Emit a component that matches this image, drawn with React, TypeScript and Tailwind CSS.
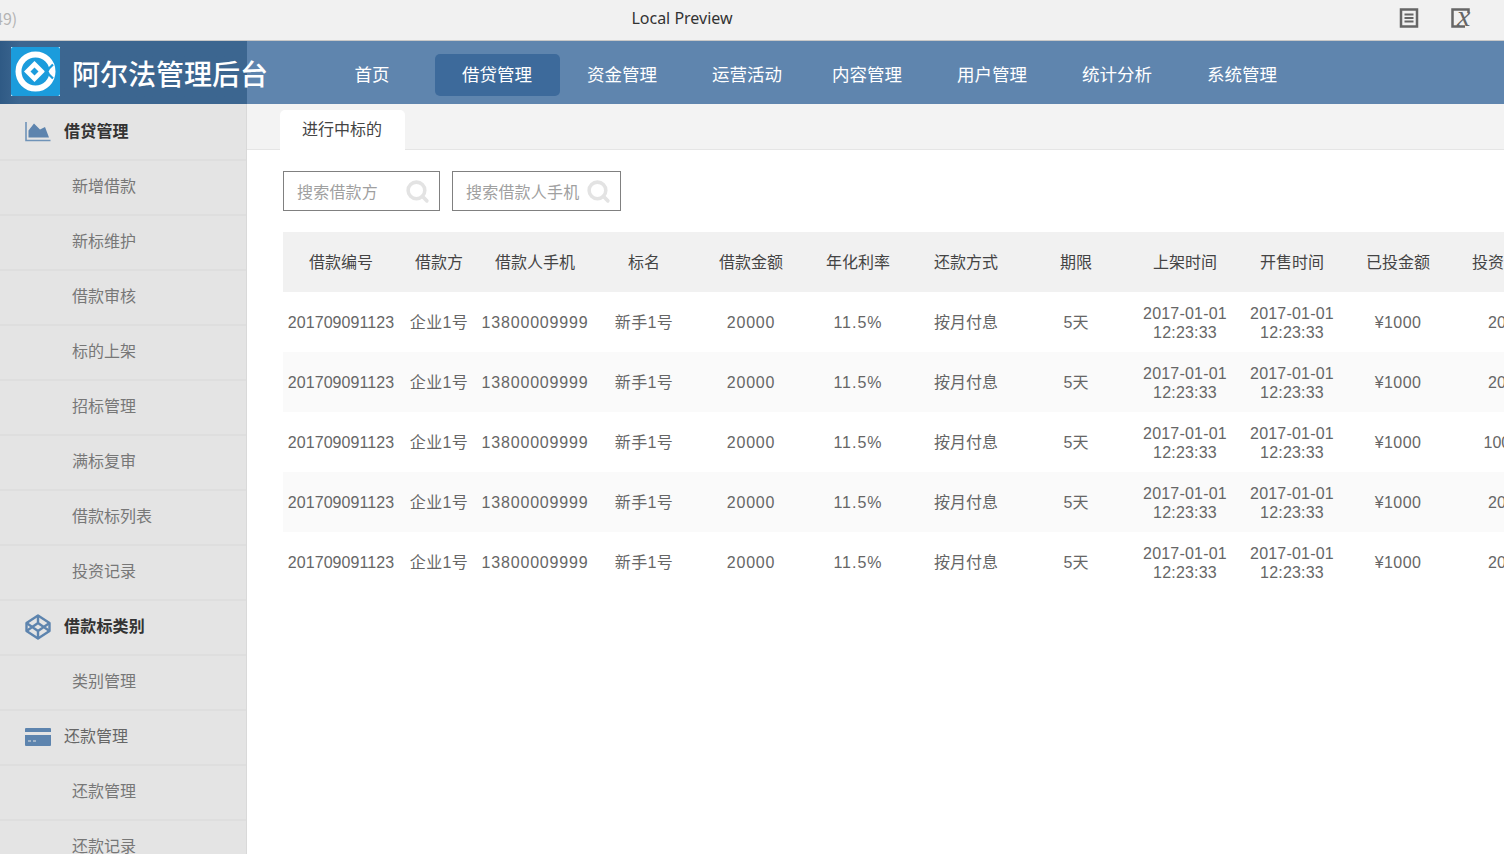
import { Search } from "lucide-react";

const FONT = "font-['Noto_Sans_CJK_SC','Noto_Sans',sans-serif]";

const navItems = ["首页", "借贷管理", "资金管理", "运营活动", "内容管理", "用户管理", "统计分析", "系统管理"];

const columns = ["借款编号", "借款方", "借款人手机", "标名", "借款金额", "年化利率", "还款方式", "期限", "上架时间", "开售时间", "已投金额", "投资进度"];

const progress = ["20%", "20%", "100%", "20%", "20%"];

const GRID = "grid grid-cols-[116px_80px_112px_106px_108px_106px_110px_110px_108px_106px_106px_106px] w-[1274px]";

function Logo() {
  return (
    <svg width="49" height="49" viewBox="0 0 49 49" className="mb-[2px] shrink-0">
      <rect width="49" height="49" fill="#fff" />
      <rect width="49" height="49" rx="2" fill="#1b9cdc" />
      <circle cx="24.500" cy="24.500" r="17" fill="none" stroke="#fff" strokeWidth="6" />
      <path d="M23.500 14 34 24.500 23.500 35 13 24.500Z" fill="#fff" />
      <path d="M23.500 20.500 27.500 24.500 23.500 28.500 19.500 24.500Z" fill="#1b9cdc" />
      <path d="M42 17.500 35 24.500 42 31.500" fill="none" stroke="#1b9cdc" strokeWidth="2.200" />
      <path d="M37.500 24.500 41 21 41 28Z" fill="#fff" />
    </svg>
  );
}

function SideIcon({ kind }: { kind: "chart" | "codepen" | "card" }) {
  if (kind === "chart") {
    return (
      <svg width="26" height="20" viewBox="0 0 26 20">
        <path d="M1 0V18.500H25.500" fill="none" stroke="#6f93b8" strokeWidth="1.600" />
        <path d="M3.500 15.500V8.500L9 1.500 15 7.500 20 5 24 15.500Z" fill="#5d84ae" />
      </svg>
    );
  }
  if (kind === "codepen") {
    return (
      <svg width="26" height="26" viewBox="0 0 26 26" fill="none" stroke="#5d84ae" strokeWidth="2.400" strokeLinejoin="round">
        <path d="M13 1.500 24.500 9V17L13 24.500 1.500 17V9Z" />
        <path d="M13 1.500V9M13 17V24.500M1.500 9 13 17 24.500 9M1.500 17 13 9 24.500 17" />
      </svg>
    );
  }
  return (
    <svg width="26" height="18" viewBox="0 0 26 18">
      <path d="M1 0H25A1 1 0 0 1 26 1V4H0V1A1 1 0 0 1 1 0Z" fill="#5d84ae" />
      <path d="M0 7H26V17A1 1 0 0 1 25 18H1A1 1 0 0 1 0 17Z" fill="#5d84ae" />
      <path d="M3 13H6M8 13H11" stroke="#e4e4e4" />
    </svg>
  );
}

function SideHead({ icon, label, bold }: { icon: "chart" | "codepen" | "card"; label: string; bold?: boolean }) {
  return (
    <div className="flex h-[55px] shrink-0 items-center border-t-2 border-[#dedede] pb-[6px] pl-[25px] first:border-t-transparent">
      <div className="mt-[4px] flex w-[39px] items-center">
        <SideIcon kind={icon} />
      </div>
      <span className={bold ? "text-base font-bold text-[#333333] tracking-[0.2px]" : "text-base text-[#666666]"}>{label}</span>
    </div>
  );
}

function SideItem({ label }: { label: string }) {
  return (
    <div className="flex h-[55px] shrink-0 items-center border-t-2 border-[#dedede] pb-[6px] pl-[72px] text-base text-[#777777]">
      {label}
    </div>
  );
}

function SearchBox({ placeholder, width }: { placeholder: string; width: string }) {
  return (
    <div className={`flex h-10 items-center justify-between border border-[#808080] pl-[13px] pr-[9px] ${width}`}>
      <span className="text-base text-[#a0a0a0] tracking-[0.2px]">{placeholder}</span>
      <Search size={25} strokeWidth={3.4} className="text-[#e3e3e3]" />
    </div>
  );
}

export default function App() {
  return (
    <div className={`flex h-[854px] w-[1504px] flex-col overflow-hidden bg-white ${FONT}`}>
      <div className="relative flex h-[41px] shrink-0 items-center justify-center border-b border-[#c8c8c8] bg-[#f1f1f1] pb-[4px] pr-[140px]">
        <span className="absolute left-[-6px] top-[6px] text-base text-[#b4b4b4]">49)</span>
        <span className="font-['Noto_Sans',sans-serif] text-base text-[#333333]">Local Preview</span>
        <svg width="20" height="20" viewBox="0 0 20 20" className="absolute left-[1399px] top-[8px]" fill="none" stroke="#666666" strokeWidth="2">
          <rect x="2" y="1.500" width="16" height="17" strokeWidth="2.500" />
          <path d="M5.500 6.500H14.500M5.500 10H14.500M5.500 13.500H14.500" />
        </svg>
        <svg width="21" height="20" viewBox="0 0 21 20" className="absolute left-[1451px] top-[8px] overflow-visible" fill="none" stroke="#666666">
          <path d="M17.500 4V1.500H1.500V18.500H14" strokeWidth="2.500" />
          <text x="6" y="18" fontFamily="Liberation Serif" fontStyle="italic" fontSize="30" fill="#666666" stroke="none">x</text>
        </svg>
      </div>

      <div className="flex h-[63px] shrink-0 bg-[#5f85ae]">
        <div className="flex w-[247px] shrink-0 items-center bg-gradient-to-r from-[#2f5a85] from-0% via-[#3c6690] via-[8%] to-[#3c6690] pl-[11px]">
          <Logo />
          <span className="ml-3 whitespace-nowrap text-[28px] font-medium text-white">阿尔法管理后台</span>
        </div>
        <nav className="ml-[63px] mt-[4px] flex items-center">
          {navItems.map((item, i) => (
            <div
              key={item}
              className={`flex h-[42px] w-[125px] items-center justify-center rounded-[5px] pr-[1px] text-[17.5px] text-white ${i === 1 ? "bg-[#3d6a9b]" : ""} ${i === 4 ? "ml-[-5px]" : ""}`}
            >
              {item}
            </div>
          ))}
        </nav>
      </div>

      <div className="flex min-h-0 flex-1">
        <aside className="flex w-[247px] shrink-0 flex-col border-r border-[#d9d9d9] bg-[#e4e4e4]">
          <SideHead icon="chart" label="借贷管理" bold />
          {["新增借款", "新标维护", "借款审核", "标的上架", "招标管理", "满标复审", "借款标列表", "投资记录"].map((item) => (
            <SideItem key={item} label={item} />
          ))}
          <SideHead icon="codepen" label="借款标类别" bold />
          <SideItem label="类别管理" />
          <SideHead icon="card" label="还款管理" />
          <SideItem label="还款管理" />
          <SideItem label="还款记录" />
        </aside>

        <main className="min-w-0 flex-1">
          <div className="flex h-[46px] items-end border-b border-[#e5e5e5] bg-[#f3f3f3] pl-[33px]">
            <div className="mb-[-1px] flex h-[40px] w-[125px] items-center justify-center rounded-t-[5px] bg-white pb-[5px] pr-[1px] text-base text-[#444444]">
              进行中标的
            </div>
          </div>

          <div className="flex gap-3 pl-9 pt-[21px]">
            <SearchBox placeholder="搜索借款方" width="w-[157px]" />
            <SearchBox placeholder="搜索借款人手机" width="w-[169px]" />
          </div>

          <div className="ml-9 mt-[21px] font-['Liberation_Sans','Noto_Sans_CJK_SC',sans-serif] text-base text-[#666666]">
            <div className={`${GRID} h-[60px] items-center bg-[#f1f1f1] pt-[2px] text-center text-[#444444]`}>
              {columns.map((c) => (
                <div key={c} className="whitespace-nowrap">{c}</div>
              ))}
            </div>
            {progress.map((p, i) => (
              <div key={i} className={`${GRID} h-[60px] items-center text-center leading-[19px] ${i % 2 === 1 ? "bg-[#fafafa]" : "bg-white"}`}>
                <div className="tracking-[0.08px]">201709091123</div>
                <div className="tracking-[0.4px]">企业1号</div>
                <div className="tracking-[0.82px]">13800009999</div>
                <div className="tracking-[0.4px]">新手1号</div>
                <div className="tracking-[0.8px]">20000</div>
                <div className="tracking-[1px]">11.5%</div>
                <div>按月付息</div>
                <div>5天</div>
                <div className="pt-[2px] tracking-[0.2px]">2017-01-01<br />12:23:33</div>
                <div className="pt-[2px] tracking-[0.2px]">2017-01-01<br />12:23:33</div>
                <div className="tracking-[0.4px]">¥1000</div>
                <div>{p}</div>
              </div>
            ))}
          </div>
        </main>
      </div>
    </div>
  );
}
